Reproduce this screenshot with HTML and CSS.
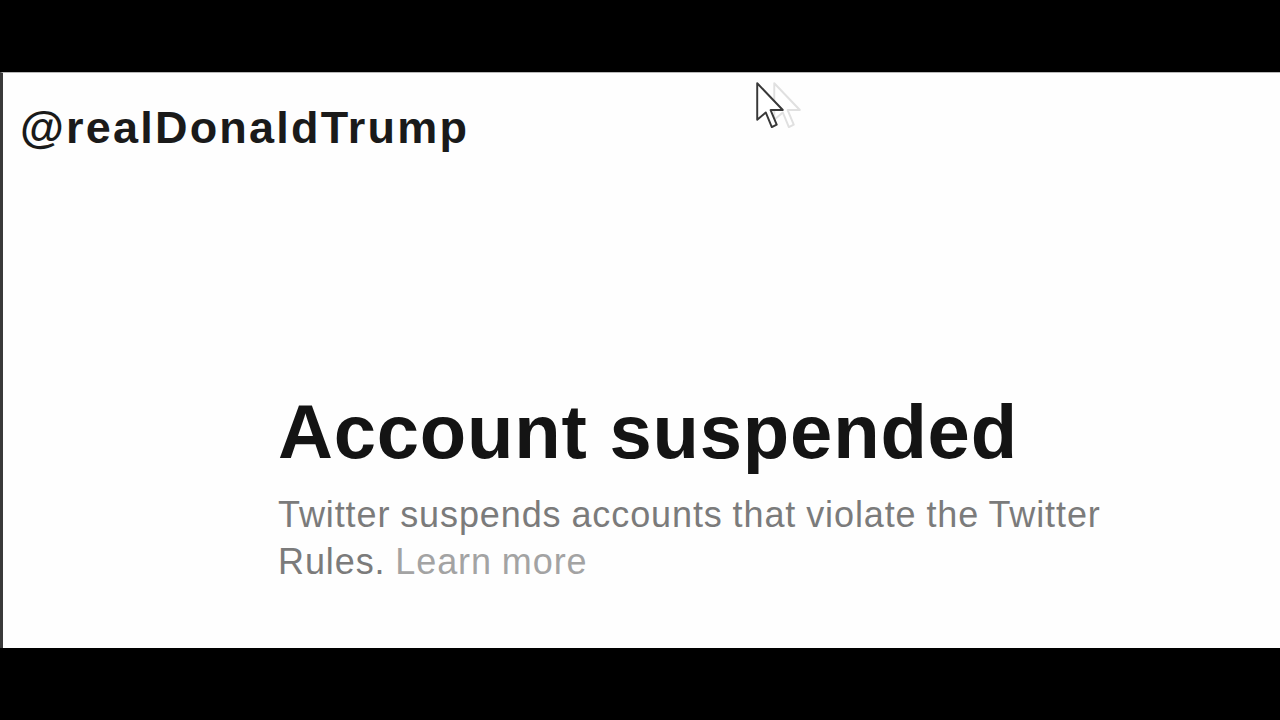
FILE: index.html
```html
<!DOCTYPE html>
<html lang="en">
  <head>
    <meta charset="UTF-8" />
    <title>Account suspended</title>
    <link rel="stylesheet" href="styles.css">
  </head>
  <body>
    <div class="screen">
      <div class="profile">
        <h2 class="handle">@realDonaldTrump</h2>
        <div class="notice">
          <h1>Account suspended</h1>
          <p>
            Twitter suspends accounts that violate the Twitter<br />
            Rules. <a href="#">Learn more</a>
          </p>
        </div>
        <!-- mouse pointer, with the ghost trail from the video -->
        <svg class="pointer" width="56" height="50" viewBox="0 0 46 41">
          <path class="ghost" d="M15 1 L15 31 L22 25 L27 37 L31 35 L26 23 L36 23 Z" />
          <path d="M1 1 L1 31 L8 25 L13 37 L17 35 L12 23 L22 23 Z" />
        </svg>
      </div>
    </div>
  </body>
</html>
```

FILE: styles.css
```css
body {
  margin: 0;
  background-color: #000;
}

.screen {
  width: 1280px;
  height: 720px;
  padding-top: 72px;
  box-sizing: border-box;
}

.profile {
  position: relative;
  height: 576px;
  background-color: #fefefe;
  border-left: 3px solid #3a3a3a;
  border-top: 1px solid #b8b8b8;
  box-sizing: border-box;
  display: flex;
  flex-direction: column;
}

.handle {
  margin: 31px 0 0 17px;
  font-family: "Liberation Sans", Arial, sans-serif;
  font-weight: bold;
  font-size: 45px;
  letter-spacing: 2.2px;
  color: #1a1a1a;
  line-height: 48px;
}

.notice {
  margin: 242px 0 0 275px;
}

.notice h1 {
  margin: 0;
  font-family: "Liberation Sans", Arial, sans-serif;
  font-weight: bold;
  font-size: 76px;
  line-height: 1;
  letter-spacing: 0.8px;
  color: #141414;
}

.notice p {
  margin: 21px 0 0;
  font-family: "Liberation Sans", Arial, sans-serif;
  font-size: 36px;
  line-height: 47px;
  letter-spacing: 0.9px;
  word-spacing: -1px;
  color: #7b7b7b;
}

.notice a {
  color: #a3a3a3;
  text-decoration: none;
}

.pointer {
  position: absolute;
  left: 753px;
  top: 9px;
}

.pointer path {
  fill: #fff;
  stroke: #383838;
  stroke-width: 1.6;
  stroke-linejoin: round;
}

.pointer .ghost {
  stroke: #e0e0e0;
}
```
